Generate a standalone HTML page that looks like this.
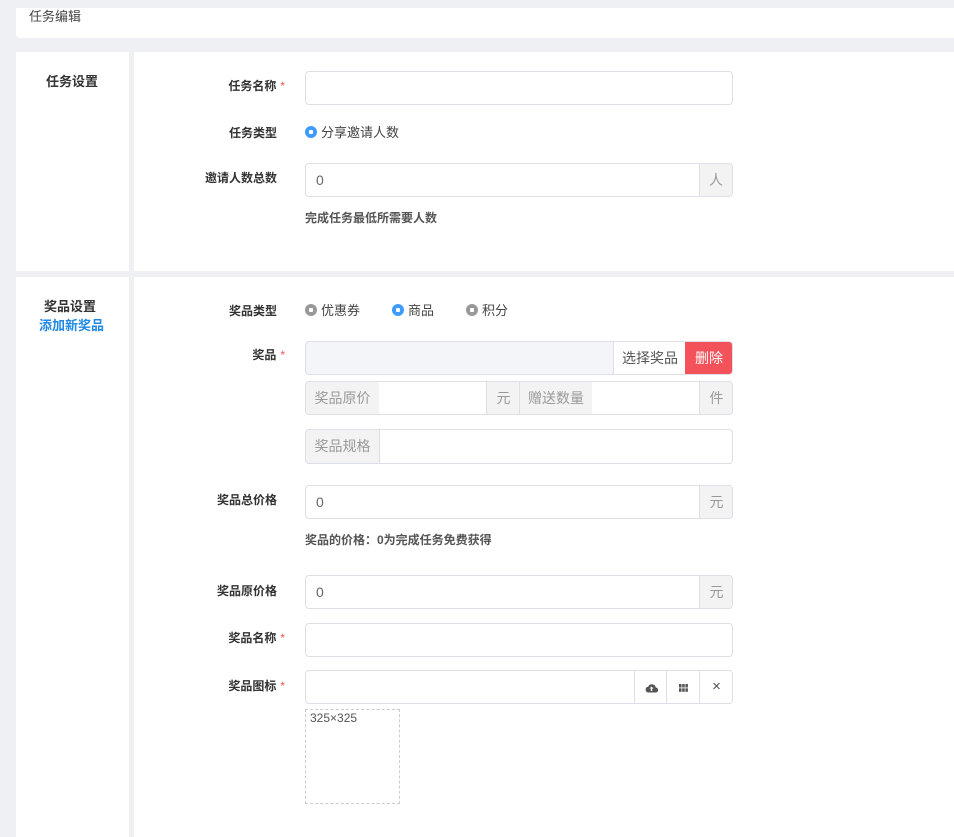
<!DOCTYPE html>
<html><head><meta charset="utf-8"><style>
*{box-sizing:border-box;margin:0;padding:0}
body{width:954px;height:827px;background:#eef0f4;font-family:"Liberation Sans","Noto Sans CJK SC",sans-serif;font-size:13px;color:#333;position:relative;overflow:hidden}
.a{position:absolute}
.card{background:#fff}
.lbl{position:absolute;right:677px;font-weight:bold;font-size:12px;color:#333;text-align:right;white-space:nowrap}
.req{color:#f4525a;margin-left:4px;font-weight:normal}
.in{position:absolute;left:305px;width:428px;height:34px;border:1px solid #dcdfe6;border-radius:4px;background:#fff;color:#666;padding-left:10px;line-height:32px;font-size:14px;overflow:hidden}
.ad{position:absolute;top:0;bottom:0;background:#f3f3f3;border-left:1px solid #dcdfe6;color:#999;text-align:center;line-height:32px;font-size:14px}
.help{position:absolute;left:305px;font-size:12px;font-weight:bold;color:#555}
.rad{display:inline-block;width:12px;height:12px;border-radius:50%;vertical-align:-1px;margin-right:4px;position:relative}
.rad:after{content:"";position:absolute;left:4px;top:4px;width:4px;height:4px;background:#fff;border-radius:1px}
.blue{background:#3e9bff}.gray{background:#999}
</style></head><body>
<div class="a card" style="left:16px;top:8px;width:950px;height:30px;border-radius:0 0 4px 4px"></div>
<div class="a" style="left:29px;top:6px;font-size:13px;color:#444">任务编辑</div>

<div class="a card" style="left:16px;top:52px;width:113px;height:219px"></div>
<div class="a card" style="left:134px;top:52px;width:830px;height:219px"></div>
<div class="a card" style="left:16px;top:277px;width:113px;height:560px"></div>
<div class="a card" style="left:134px;top:277px;width:830px;height:560px"></div>

<div class="a" style="left:46px;top:71px;font-weight:bold;font-size:13px">任务设置</div>
<div class="a" style="left:44px;top:296px;font-weight:bold;font-size:13px">奖品设置</div>
<div class="a" style="left:39px;top:315px;font-weight:bold;font-size:13px;color:#1e88e5">添加新奖品</div>

<div class="lbl" style="top:77px;right:669px">任务名称<span class="req">*</span></div>
<div class="in" style="top:71px"></div>
<div class="lbl" style="top:124px">任务类型</div>
<div class="a" style="left:305px;top:122px;color:#444"><span class="rad blue"></span>分享邀请人数</div>
<div class="lbl" style="top:169px">邀请人数总数</div>
<div class="in" style="top:163px">0<div class="ad" style="left:393px;width:33px">人</div></div>
<div class="help" style="top:209px">完成任务最低所需要人数</div>

<div class="lbl" style="top:302px">奖品类型</div>
<div class="a" style="left:305px;top:300px;color:#444"><span class="rad gray"></span>优惠券</div>
<div class="a" style="left:392px;top:300px;color:#444"><span class="rad blue"></span>商品</div>
<div class="a" style="left:466px;top:300px;color:#444"><span class="rad gray"></span>积分</div>

<div class="lbl" style="top:346px;right:669px">奖品<span class="req">*</span></div>
<div class="in" style="top:341px;background:#f4f5f9">
<div class="ad" style="left:307px;width:73px;background:#fff;color:#555;border-left:1px solid #dcdfe6">选择奖品</div>
<div class="ad" style="left:379px;width:48px;background:#f4525a;color:#fff;border:none">删除</div></div>

<div class="in" style="top:381px;padding:0;background:#fff">
<div class="ad" style="left:0;width:73px;border-left:none">奖品原价</div>
<div class="ad" style="left:180px;width:34px">元</div>
<div class="ad" style="left:213px;width:73px">赠送数量</div>
<div class="ad" style="left:393px;width:34px">件</div></div>

<div class="in" style="top:429px;height:35px;padding:0">
<div class="ad" style="left:0;width:74px;border-left:none;line-height:33px;border-right:1px solid #dcdfe6">奖品规格</div></div>

<div class="lbl" style="top:491px">奖品总价格</div>
<div class="in" style="top:485px">0<div class="ad" style="left:393px;width:34px">元</div></div>
<div class="help" style="top:531px">奖品的价格：0为完成任务免费获得</div>

<div class="lbl" style="top:582px">奖品原价格</div>
<div class="in" style="top:575px">0<div class="ad" style="left:393px;width:34px">元</div></div>

<div class="lbl" style="top:629px;right:669px">奖品名称<span class="req">*</span></div>
<div class="in" style="top:623px"></div>

<div class="lbl" style="top:677px;right:669px">奖品图标<span class="req">*</span></div>
<div class="in" style="top:670px">
<div class="ad" style="left:328px;width:33px;background:#fff;color:#555"><svg width="13" height="10" viewBox="0 0 13 10" style="vertical-align:-1px"><path d="M3 9.5h7.5a2.5 2.5 0 0 0 .3-5A4 4 0 0 0 3.2 3.6 3 3 0 0 0 3 9.5z" fill="#555"/><path d="M6.5 3.5l2 2H7.2v2.5H5.8V5.5H4.5z" fill="#fff"/></svg></div>
<div class="ad" style="left:360px;width:33px;background:#fff;color:#555"><svg width="9" height="8" style="vertical-align:0"><g fill="#555"><rect x="0" y="0" width="2.5" height="3.5"/><rect x="3.2" y="0" width="2.5" height="3.5"/><rect x="6.4" y="0" width="2.5" height="3.5"/><rect x="0" y="4.3" width="2.5" height="3.5"/><rect x="3.2" y="4.3" width="2.5" height="3.5"/><rect x="6.4" y="4.3" width="2.5" height="3.5"/></g></svg></div>
<div class="ad" style="left:393px;width:34px;background:#fff;color:#555;font-size:15px">×</div></div>
<div class="a" style="left:305px;top:709px;width:95px;height:95px;border:1px dashed #ccc;font-size:12px;color:#555;padding:1px 4px">325×325</div>
</body></html>
